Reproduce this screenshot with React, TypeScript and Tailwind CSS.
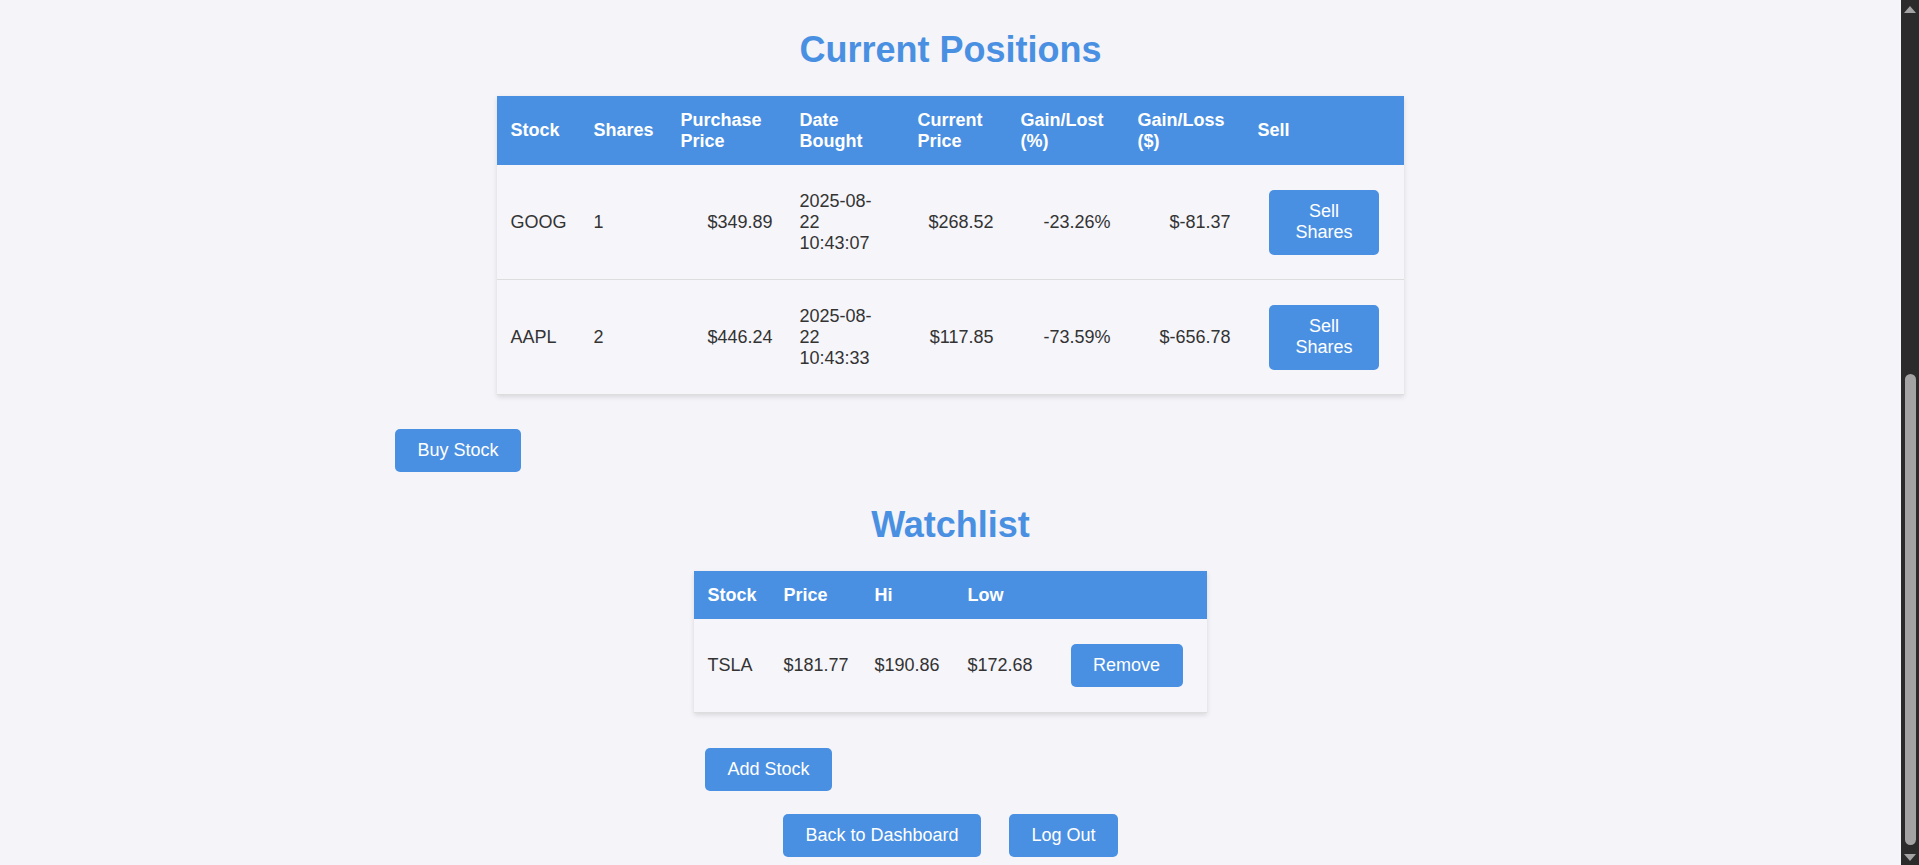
import React from 'react';

const positions = [
  { symbol: 'GOOG', shares: 1, purchase: '$349.89', date: ['2025-08-', '22', '10:43:07'], current: '$268.52', pct: '-23.26%', gain: '$-81.37' },
  { symbol: 'AAPL', shares: 2, purchase: '$446.24', date: ['2025-08-', '22', '10:43:33'], current: '$117.85', pct: '-73.59%', gain: '$-656.78' },
];

const watchlist = [{ symbol: 'TSLA', price: '$181.77', hi: '$190.86', low: '$172.68' }];

const btn = 'bg-[#4a90e2] text-white text-[18px] leading-[21px] rounded-[5px] px-[22.5px] py-[11px]';
const th = 'text-left font-bold px-[13.5px] py-[13.5px] align-middle';
const td = 'px-[13.5px] py-[24.5px] align-middle border-b border-[#dddddd]';
const wtd = 'px-[13.5px] py-[25px] align-middle border-b border-[#dddddd]';

function Scrollbar() {
  return (
    <div className="w-[18px] h-[865px] bg-[#2b2b2b] flex flex-col items-center flex-shrink-0">
      <svg width="12" height="7" viewBox="0 0 12 7" className="mt-[6px]">
        <polygon points="6,0 12,7 0,7" fill="#a3a3a3" />
      </svg>
      <div className="mt-[361px] w-[11px] h-[471px] bg-[#a3a3a3] rounded-[6px]" />
      <svg width="12" height="7" viewBox="0 0 12 7" className="mt-[9px]">
        <polygon points="0,0 12,0 6,7" fill="#a3a3a3" />
      </svg>
    </div>
  );
}

export default function App() {
  return (
    <div className="flex h-[865px] overflow-hidden bg-[#f4f4f9] text-[#333333] font-['Liberation_Sans',Arial,sans-serif] text-[18px] leading-[21px]">
      <div className="flex-1">
        <div className="w-[1111px] mx-auto">
          <h1 className="pt-[29px] text-center text-[36px] leading-[41px] font-bold text-[#4a90e2]">Current Positions</h1>

          <div className="mt-[26px] mx-auto w-[907px] shadow-[0_2px_5px_rgba(0,0,0,0.12)]">
            <table className="w-full table-fixed border-collapse">
              <colgroup>
                <col className="w-[83px]" />
                <col className="w-[87px]" />
                <col className="w-[119px]" />
                <col className="w-[118px]" />
                <col className="w-[103px]" />
                <col className="w-[117px]" />
                <col className="w-[120px]" />
                <col className="w-[160px]" />
              </colgroup>
              <thead className="bg-[#4a90e2] text-white">
                <tr>
                  <th className={th}>Stock</th>
                  <th className={th}>Shares</th>
                  <th className={th}>Purchase Price</th>
                  <th className={th}>Date Bought</th>
                  <th className={th}>Current Price</th>
                  <th className={th}>Gain/Lost (%)</th>
                  <th className={th}>Gain/Loss ($)</th>
                  <th className={th}>Sell</th>
                </tr>
              </thead>
              <tbody className="bg-[#f5f5fa]">
                {positions.map((p) => (
                  <tr key={p.symbol}>
                    <td className={td}>{p.symbol}</td>
                    <td className={td}>{p.shares}</td>
                    <td className={`${td} text-right`}>{p.purchase}</td>
                    <td className={td}>
                      {p.date.map((d) => (
                        <div key={d}>{d}</div>
                      ))}
                    </td>
                    <td className={`${td} text-right`}>{p.current}</td>
                    <td className={`${td} text-right`}>{p.pct}</td>
                    <td className={`${td} text-right`}>{p.gain}</td>
                    <td className={`${td} text-center`}>
                      <button className="bg-[#4a90e2] text-white text-[18px] leading-[21px] rounded-[5px] w-[110px] h-[65px]">
                        Sell
                        <br />
                        Shares
                      </button>
                    </td>
                  </tr>
                ))}
              </tbody>
            </table>
          </div>

          <div className="mt-[34px]">
            <button className={btn}>Buy Stock</button>
          </div>

          <h2 className="mt-[32px] text-center text-[36px] leading-[41px] font-bold text-[#4a90e2]">Watchlist</h2>

          <div className="mt-[26px] mx-auto w-[513px]">
            <div className="shadow-[0_2px_5px_rgba(0,0,0,0.12)]">
              <table className="w-full table-fixed border-collapse">
                <colgroup>
                  <col className="w-[76px]" />
                  <col className="w-[91px]" />
                  <col className="w-[93px]" />
                  <col className="w-[103px]" />
                  <col className="w-[150px]" />
                </colgroup>
                <thead className="bg-[#4a90e2] text-white">
                  <tr>
                    <th className={th}>Stock</th>
                    <th className={th}>Price</th>
                    <th className={th}>Hi</th>
                    <th className={th}>Low</th>
                    <th className={th}></th>
                  </tr>
                </thead>
                <tbody className="bg-[#f5f5fa]">
                  {watchlist.map((w) => (
                    <tr key={w.symbol}>
                      <td className={wtd}>{w.symbol}</td>
                      <td className={wtd}>{w.price}</td>
                      <td className={wtd}>{w.hi}</td>
                      <td className={wtd}>{w.low}</td>
                      <td className={wtd}>
                        <button className={btn}>Remove</button>
                      </td>
                    </tr>
                  ))}
                </tbody>
              </table>
            </div>

            <div className="mt-[35px] pl-[11px]">
              <button className={btn}>Add Stock</button>
            </div>
          </div>

          <div className="mt-[23px] flex justify-center gap-[28px]">
            <button className={btn}>Back to Dashboard</button>
            <button className={btn}>Log Out</button>
          </div>
        </div>
      </div>
      <Scrollbar />
    </div>
  );
}
